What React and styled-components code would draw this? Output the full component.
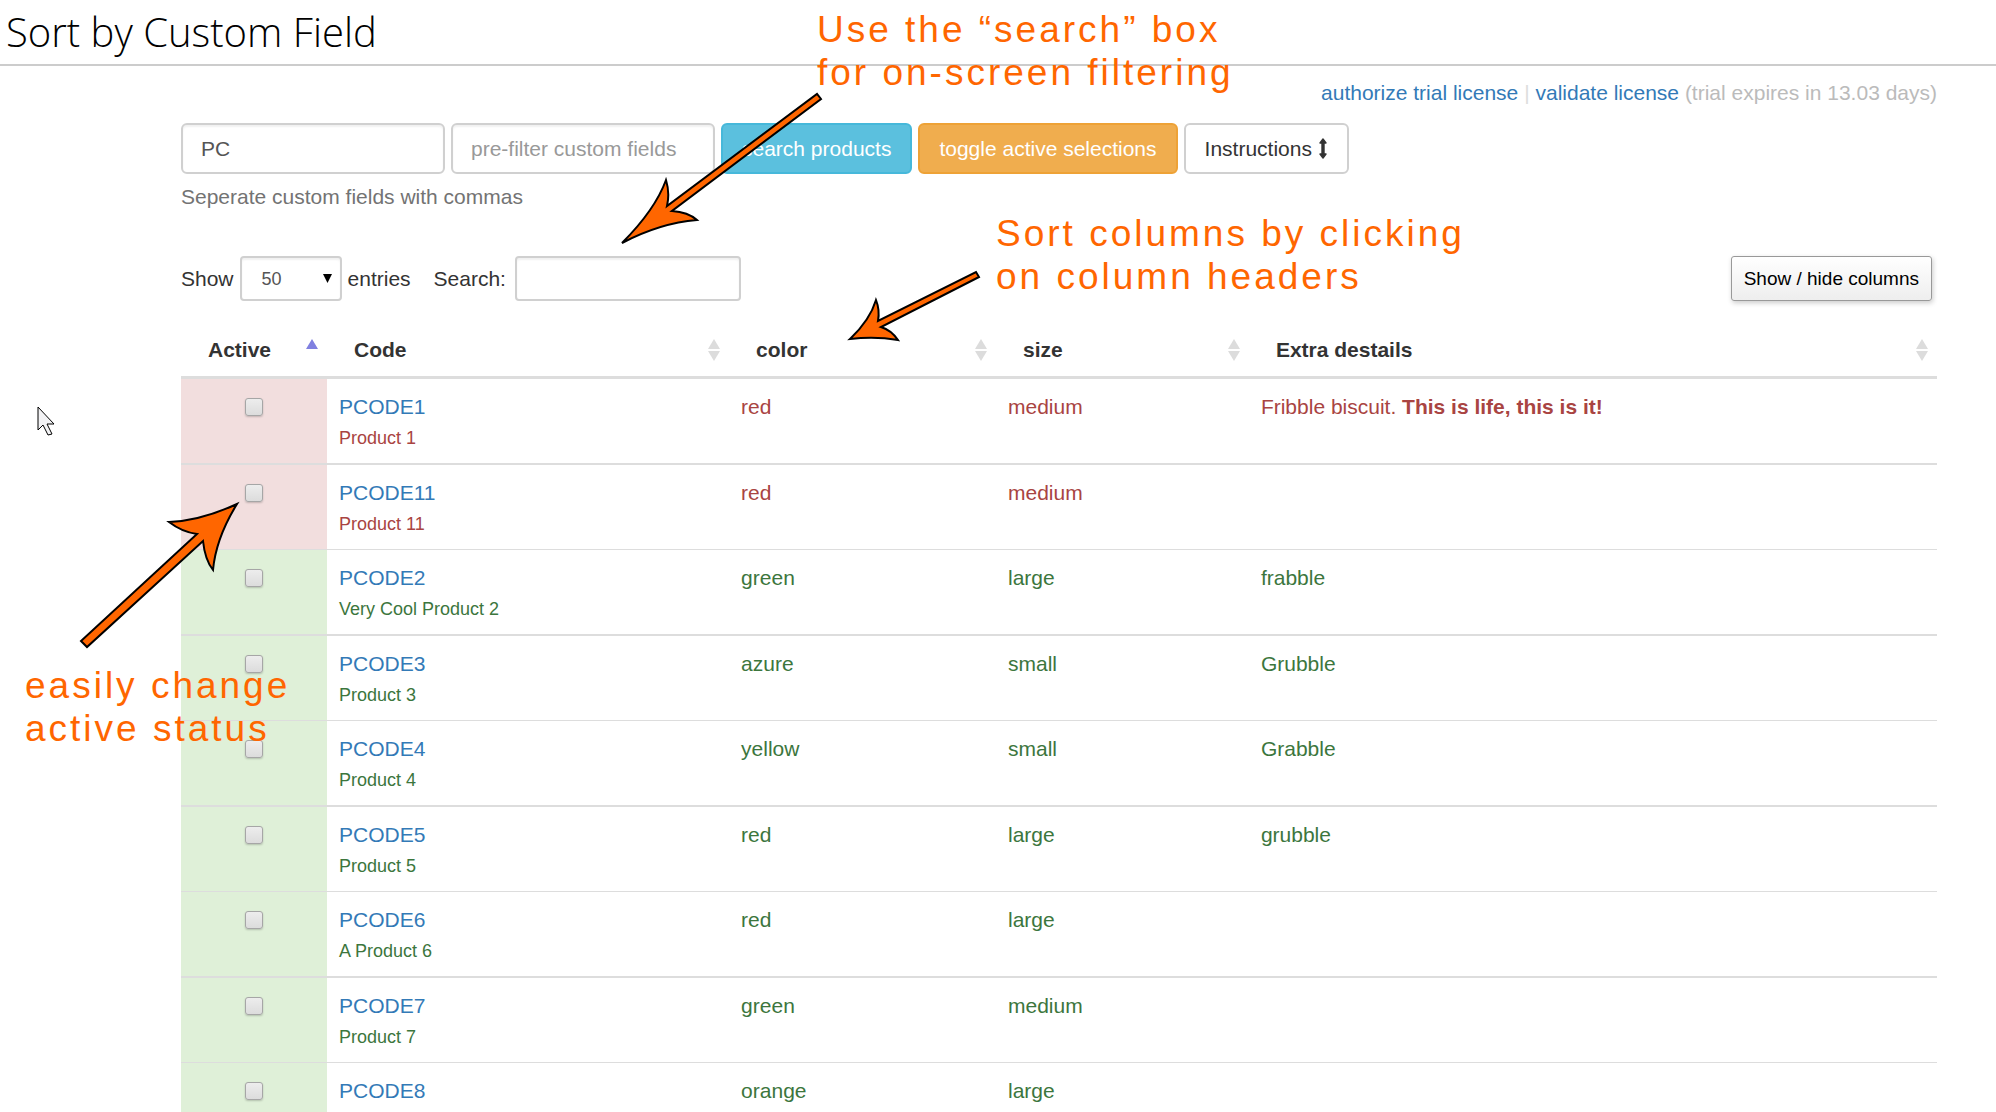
import React, { useState } from 'react'
import styled, { createGlobalStyle, css } from 'styled-components'

const GlobalStyle = createGlobalStyle`
  *, *::before, *::after { box-sizing: border-box; }
  body {
    margin: 0;
    background: #fff;
    color: #333;
    font-family: "Liberation Sans", Arial, sans-serif;
    font-size: 21px;
    line-height: 30px;
  }
  a { color: #337ab7; text-decoration: none; }
  button, input, select { font-family: inherit; }
`

const Page = styled.div`
  position: relative;
  height: 100vh;
  overflow: hidden;
`

const Header = styled.header`
  padding: 0 6px;
  border-bottom: 2px solid #ccc;
`

const Title = styled.h1`
  margin: 0;
  font-family: "Open Sans", sans-serif;
  font-size: 40px;
  font-weight: 300;
  line-height: 64px;
  color: #000;
`

const Content = styled.main`
  padding: 0 59px 0 181px;
`

const License = styled.p`
  margin: 12px 0 15px;
  text-align: right;
  color: #bbb;
`

const Divider = styled.span`
  color: #ddd;
`

const Toolbar = styled.form`
  display: flex;
  gap: 6px;
`

const field = css`
  border: 2px solid #d0d0d0;
  background: #fff;
  color: #555;
  box-shadow: inset 0 2px 2px rgba(0, 0, 0, 0.06);
`

const TextField = styled.input`
  ${field}
  width: 264px;
  height: 51px;
  padding: 0 18px;
  border-radius: 6px;
  font-size: 21px;

  &::placeholder { color: #999; }
`

const Button = styled.button`
  display: flex;
  align-items: center;
  gap: 6px;
  height: 51px;
  padding: 0 19px;
  border: 2px solid ${props => props.$border};
  border-radius: 6px;
  background: ${props => props.$fill};
  color: ${props => props.$color};
  font-size: 21px;
  white-space: nowrap;
`

const Help = styled.p`
  margin: 8px 0 44px;
  color: #737373;
`

const TableTools = styled.div`
  display: flex;
  align-items: center;
  margin-bottom: 22px;
`

const Label = styled.label`
  display: flex;
  align-items: center;
  gap: 6px;
  margin-right: 23px;
`

const SelectWrap = styled.span`
  position: relative;
`

const Select = styled.select`
  ${field}
  appearance: none;
  display: block;
  width: 102px;
  height: 45px;
  padding: 0 20px;
  border-radius: 4px;
  font-size: 18px;
`

const SelectArrow = styled.svg`
  position: absolute;
  top: 18px;
  right: 10px;
  pointer-events: none;
`

const SearchBox = styled.input`
  ${field}
  width: 226px;
  height: 45px;
  margin-left: 3px;
  padding: 0 15px;
  border-radius: 4px;
  font-size: 18px;
`

const ColumnsButton = styled.button`
  height: 45px;
  margin: 0 5px 0 auto;
  padding: 0 12px;
  border: 1px solid #999;
  border-radius: 3px;
  background: linear-gradient(#fff, #eee);
  box-shadow: 1px 2px 5px #ccc;
  color: #000;
  font-size: 19px;
`

const Table = styled.table`
  width: 100%;
  border-collapse: separate;
  border-spacing: 0;
  table-layout: fixed;
`

const HeadCell = styled.th`
  width: ${props => props.$width || 'auto'};
  padding: 12px 8px 11px 27px;
  border-bottom: 3px solid #ddd;
  text-align: left;
`

const HeadInner = styled.div`
  display: flex;
  align-items: center;
  justify-content: space-between;
`

const Row = styled.tr`
  color: ${props => (props.$active ? '#3c763d' : '#a94442')};

  td { border-bottom: 1px solid #ddd; }
  &:nth-child(odd) td { border-bottom-width: 2px; }
`

const Cell = styled.td`
  padding: 13px 12px 10px;
  vertical-align: top;
`

const CheckCell = styled(Cell)`
  background: ${props => (props.$active ? '#dff0d8' : '#f2dede')};
  background-clip: padding-box;
`

const Checkbox = styled.input`
  appearance: none;
  display: block;
  width: 18px;
  height: 18px;
  margin: 6px auto 0;
  border: 1px solid #a6a6a6;
  border-radius: 3px;
  background: linear-gradient(#ededed, #dcdcdc);
  box-shadow: 0 1px 2px rgba(0, 0, 0, 0.2);

  &:checked { background: #337ab7; }
`

const ProductName = styled.div`
  margin-top: 1px;
  font-size: 18px;
`

const Note = styled.p`
  position: absolute;
  left: ${props => props.$x}px;
  top: ${props => props.$y}px;
  margin: 0;
  color: #f60;
  font-size: 37px;
  line-height: 43px;
  letter-spacing: 3px;
  white-space: nowrap;
  pointer-events: none;
`

const Overlay = styled.svg`
  position: absolute;
  left: 0;
  top: 0;
  pointer-events: none;
`

const columns = [
  { name: 'Active', width: '146px', sorted: true },
  { name: 'Code', width: '22.9%' },
  { name: 'color', width: '15.2%' },
  { name: 'size', width: '14.4%' },
  { name: 'Extra destails' },
]

const products = [
  { code: 'PCODE1', name: 'Product 1', color: 'red', size: 'medium', extra: <>Fribble biscuit. <b>This is life, this is it!</b></>, active: false },
  { code: 'PCODE11', name: 'Product 11', color: 'red', size: 'medium', extra: '', active: false },
  { code: 'PCODE2', name: 'Very Cool Product 2', color: 'green', size: 'large', extra: 'frabble', active: true },
  { code: 'PCODE3', name: 'Product 3', color: 'azure', size: 'small', extra: 'Grubble', active: true },
  { code: 'PCODE4', name: 'Product 4', color: 'yellow', size: 'small', extra: 'Grabble', active: true },
  { code: 'PCODE5', name: 'Product 5', color: 'red', size: 'large', extra: 'grubble', active: true },
  { code: 'PCODE6', name: 'A Product 6', color: 'red', size: 'large', extra: '', active: true },
  { code: 'PCODE7', name: 'Product 7', color: 'green', size: 'medium', extra: '', active: true },
  { code: 'PCODE8', name: '', color: 'orange', size: 'large', extra: '', active: true },
]

function SortIcon({ sorted }) {
  return (
    <svg width="14" height="24" viewBox="0 0 14 24">
      <path d="M7 1 L13 11 H1 Z" fill={sorted ? '#8080e0' : '#dcdcdc'} />
      {!sorted && <path d="M7 23 L13 13 H1 Z" fill="#dcdcdc" />}
    </svg>
  )
}

export default function App() {
  const [prefix, setPrefix] = useState('PC')

  return (
    <Page>
      <GlobalStyle />
      <Header>
        <Title>Sort by Custom Field</Title>
      </Header>

      <Content>
        <License>
          <a href="#authorize">authorize trial license</a> <Divider>|</Divider>{' '}
          <a href="#validate">validate license</a> (trial expires in 13.03 days)
        </License>

        <Toolbar onSubmit={e => e.preventDefault()}>
          <TextField aria-label="product code" value={prefix} onChange={e => setPrefix(e.target.value)} />
          <TextField aria-label="pre-filter custom fields" placeholder="pre-filter custom fields" />
          <Button type="submit" $fill="#5bc0de" $border="#46b8da" $color="#fff">search products</Button>
          <Button type="button" $fill="#f0ad4e" $border="#eea236" $color="#fff">toggle active selections</Button>
          <Button type="button" $fill="#fff" $border="#d0d0d0" $color="#333">
            Instructions
            <svg width="10" height="21" viewBox="0 0 10 21">
              <path
                d="M5 1 L8 5 H6 V16 H8 L5 20 L2 16 H4 V5 H2 Z"
                fill="#333"
                stroke="#333"
                strokeWidth="1.4"
                strokeLinejoin="round"
              />
            </svg>
          </Button>
        </Toolbar>
        <Help>Seperate custom fields with commas</Help>

        <TableTools>
          <Label>
            Show
            <SelectWrap>
              <Select defaultValue="50">
                <option>10</option>
                <option>50</option>
                <option>100</option>
              </Select>
              <SelectArrow width="9" height="9" viewBox="0 0 9 9">
                <path d="M0 0 H9 L4.5 9 Z" fill="#000" />
              </SelectArrow>
            </SelectWrap>
            entries
          </Label>
          <Label>
            Search:
            <SearchBox type="text" />
          </Label>
          <ColumnsButton type="button">Show / hide columns</ColumnsButton>
        </TableTools>

        <Table>
          <thead>
            <tr>
              {columns.map(col => (
                <HeadCell key={col.name} $width={col.width}>
                  <HeadInner>
                    {col.name}
                    <SortIcon sorted={col.sorted} />
                  </HeadInner>
                </HeadCell>
              ))}
            </tr>
          </thead>
          <tbody>
            {products.map(product => (
              <Row key={product.code} $active={product.active}>
                <CheckCell $active={product.active}>
                  <Checkbox type="checkbox" aria-label={product.code} />
                </CheckCell>
                <Cell>
                  <a href={'#' + product.code}>{product.code}</a>
                  <ProductName>{product.name}</ProductName>
                </Cell>
                <Cell>{product.color}</Cell>
                <Cell>{product.size}</Cell>
                <Cell>{product.extra}</Cell>
              </Row>
            ))}
          </tbody>
        </Table>
      </Content>

      <Note $x={817} $y={8}>Use the “search” box<br />for on-screen filtering</Note>
      <Note $x={996} $y={212}>Sort columns by clicking<br />on column headers</Note>
      <Note $x={25} $y={664}>easily change<br />active status</Note>

      <Overlay width="1000" height="660" viewBox="0 0 1000 660">
        <g fill="#f60" stroke="#000" strokeWidth="2">
          <path d="M622 243 Q655 210 666 180 Q670 193 667 206 L817 94 L821 99 L672 211 Q688 212 697 220 Q660 223 622 243 Z" />
          <path d="M850 339 Q870 320 876 300 Q880 310 878 321 L976 272 L979 277 L881 327 Q891 330 898 340 Q875 336 850 339 Z" />
          <path d="M237 504 Q200 521 169 522 Q182 532 197 534 L81 641 L87 647 L203 541 Q205 560 213 570 Q216 538 237 504 Z" />
        </g>
        <path d="M38 407 V430 L43 425 L48 435 L52 434 L47 424 H54 Z" fill="#f2f2f4" stroke="#000" strokeWidth="1" />
      </Overlay>
    </Page>
  )
}
